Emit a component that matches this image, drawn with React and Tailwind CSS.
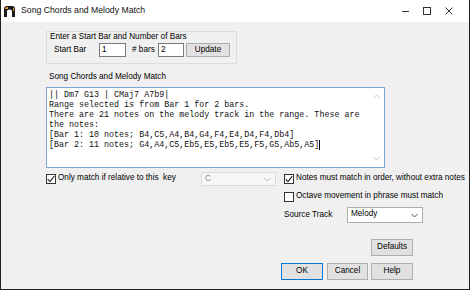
import React from "react";

function Check({ checked }) {
  return (
    <div className="w-[10px] h-[10px] border border-[#333333] bg-white flex items-center justify-center shrink-0">
      {checked && (
        <svg width="8" height="8" viewBox="0 0 8 8">
          <path d="M0.8 4.2 L3 6.6 L7.3 1" fill="none" stroke="#222" strokeWidth="1.1" />
        </svg>
      )}
    </div>
  );
}

function Chevron({ color = "#555" }) {
  return (
    <svg width="7" height="5" viewBox="0 0 7 5">
      <path d="M0.5 1 L3.5 4 L6.5 1" fill="none" stroke={color} strokeWidth="1" />
    </svg>
  );
}

function Btn({ children, w, def }) {
  return (
    <div
      className={`h-[17px] flex items-center justify-center bg-[#e1e1e1] border ${def ? "border-[#0078d7]" : "border-[#adadad]"} ${w} text-[8.2px] text-black`}
    >
      {children}
    </div>
  );
}

export default function App() {
  const lines = [
    "|| Dm7 G13 | CMaj7 A7b9|",
    "Range selected is from Bar 1 for 2 bars.",
    "There are 21 notes on the melody track in the range. These are",
    "the notes:",
    "[Bar 1: 10 notes; B4,C5,A4,B4,G4,F4,E4,D4,F4,Db4]",
    "[Bar 2: 11 notes; G4,A4,C5,Eb5,E5,Eb5,E5,F5,G5,Ab5,A5]",
  ];
  return (
    <div className="w-[470px] h-[290px] flex flex-col border-x border-b border-[#1e1e1e] bg-[#f0f0f0] overflow-hidden font-['Liberation_Sans',Arial,sans-serif] text-[#000] whitespace-nowrap">
      {/* title bar */}
      <div className="h-[22px] bg-white flex items-center shrink-0">
        <svg className="ml-[2px]" width="13" height="13" viewBox="0 0 13 13">
          <path d="M1 12 L1 4 Q1 1 4 1 L9 1 Q12 1 12 4 L12 12 L9 12 L9 6 Q9 4.5 6.5 4.5 Q4 4.5 4 6 L4 12 Z" fill="#1a1a1a" />
          <path d="M2 4 Q2 2 4 2 L5 2 L5 4 Z" fill="#e0a020" />
          <path d="M10 3 L11 3 L11 6 L10 6 Z" fill="#e0a020" />
        </svg>
        <span className="ml-[5px] text-[8.7px] text-[#111]">Song Chords and Melody Match</span>
        <div className="ml-auto flex items-center">
          <svg width="22" height="14" viewBox="0 0 22 14">
            <path d="M7 7.5 H14" stroke="#333" strokeWidth="1" />
          </svg>
          <svg width="22" height="14" viewBox="0 0 22 14">
            <rect x="6.5" y="3.5" width="7" height="7" fill="none" stroke="#333" strokeWidth="1" />
          </svg>
          <svg className="mr-[8px]" width="22" height="14" viewBox="0 0 22 14">
            <path d="M6.5 3.5 L13.5 10.5 M13.5 3.5 L6.5 10.5" stroke="#333" strokeWidth="1" />
          </svg>
        </div>
      </div>

      {/* body */}
      <div className="flex flex-col pl-[45px] pt-[9px] text-[8.2px]">
        {/* group box */}
        <div className="w-[191px] h-[33px] border border-[#dcdcdc] flex flex-col">
          <div className="pl-[3px] leading-[10px] h-[10px]">Enter a Start Bar and Number of Bars</div>
          <div className="flex items-center mt-[1px] h-[14px]">
            <span className="ml-[7px] w-[45px]">Start Bar</span>
            <div className="w-[27px] h-[14px] bg-white border border-[#7a7a7a] pl-[2px] leading-[12px]">1</div>
            <span className="ml-[6px] w-[26px]"># bars</span>
            <div className="w-[26px] h-[14px] bg-white border border-[#7a7a7a] pl-[2px] leading-[12px]">2</div>
            <div className="ml-[2px] w-[44px] h-[14px] bg-[#e1e1e1] border border-[#adadad] flex items-center justify-center">Update</div>
          </div>
        </div>

        <div className="mt-[8px] ml-[3px] leading-[10px] h-[10px]">Song Chords and Melody Match</div>

        {/* textarea */}
        <div className="mt-[5px] w-[339px] h-[81px] bg-white border border-[#7aa7d6] flex">
          <div className="flex-1 pl-[2px] pt-[2px] font-['Liberation_Mono','Courier_New',monospace] text-[8.35px] leading-[10px] text-[#111] whitespace-pre">
            {lines.map((l, i) => (
              <div key={i} className="h-[10px]">
                {l}
                {i === lines.length - 1 && <span className="inline-block w-[1px] h-[10px] bg-black align-top" />}
              </div>
            ))}
          </div>
          <div className="w-[15px] flex flex-col items-center justify-between py-[6px]">
            <svg width="7" height="5" viewBox="0 0 7 5">
              <path d="M0.5 4 L3.5 1 L6.5 4" fill="none" stroke="#c4c4c4" strokeWidth="1" />
            </svg>
            <Chevron color="#c4c4c4" />
          </div>
        </div>

        {/* bottom area */}
        <div className="flex mt-[4px]">
          <div className="w-[235px] flex items-start">
            <div className="flex items-center h-[11px] mt-[1px]">
              <Check checked />
              <span className="ml-[2px]">Only match if relative to this&nbsp; key</span>
            </div>
            <div className="ml-auto mr-[5px] w-[75px] h-[14px] bg-[#f7f7f7] border border-[#d9d9d9] flex items-center pl-[3px] pr-[4px] text-[#8a8a8a]">
              <span>C</span>
              <span className="ml-auto">
                <Chevron color="#b0b0b0" />
              </span>
            </div>
          </div>

          <div className="flex flex-col">
            <div className="flex items-center h-[11px] mt-[1px] ml-[3px]">
              <Check checked />
              <span className="ml-[2px]">Notes must match in order, without extra notes</span>
            </div>
            <div className="flex items-center h-[11px] mt-[7px] ml-[3px]">
              <Check />
              <span className="ml-[2px]">Octave movement in phrase must match</span>
            </div>
            <div className="flex items-center mt-[5px] ml-[3px] h-[16px]">
              <span className="w-[63px]">Source Track</span>
              <div className="w-[76px] h-[16px] bg-white border border-[#adadad] flex items-start pl-[3px] pr-[4px]">
                <span className="leading-[11px]">Melody</span>
                <span className="ml-auto self-center">
                  <Chevron />
                </span>
              </div>
            </div>
            <div className="mt-[16px] ml-[90px]">
              <Btn w="w-[42px]">Defaults</Btn>
            </div>
            <div className="flex mt-[7px]">
              <Btn w="w-[42px]" def>OK</Btn>
              <div className="ml-[4px]">
                <Btn w="w-[41px]">Cancel</Btn>
              </div>
              <div className="ml-[3px]">
                <Btn w="w-[42px]">Help</Btn>
              </div>
            </div>
          </div>
        </div>
      </div>
    </div>
  );
}
